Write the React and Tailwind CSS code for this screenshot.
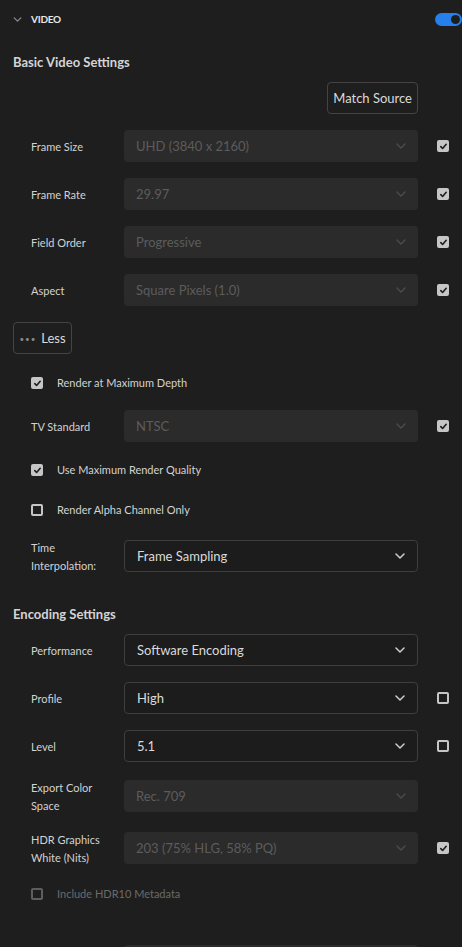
import React from "react";

const font = { fontFamily: "Lato, 'Noto Sans', sans-serif" };

function Chevron({ className }) {
  return (
    <svg viewBox="0 0 10 6" className={className} fill="none" stroke="currentColor" strokeWidth="1.5" strokeLinecap="round" strokeLinejoin="round">
      <path d="M1 1l4 4 4-4" />
    </svg>
  );
}

function Check({ checked, dim }) {
  if (checked) {
    return (
      <div className="w-[12px] h-[12px] rounded-[2px] bg-[#c6c6c6] flex items-center justify-center shrink-0">
        <svg viewBox="0 0 10 10" className="w-[9px] h-[9px]" fill="none" stroke="#1e1e1e" strokeWidth="1.8" strokeLinecap="round" strokeLinejoin="round">
          <path d="M2 5.2l2 2 4-4.6" />
        </svg>
      </div>
    );
  }
  return (
    <div className={"w-[12px] h-[12px] rounded-[2px] border-2 shrink-0 " + (dim ? "border-[#5e5e5e]" : "border-[#c6c6c6]")} />
  );
}

function Dropdown({ value, disabled }) {
  return (
    <div
      className={
        "w-[294px] h-[32px] rounded-[4px] flex items-center justify-between pl-[12px] pr-[12px] shrink-0 " +
        (disabled ? "bg-[#2b2b2b] text-[#5c5c5c]" : "bg-[#1c1c1c] border border-[#3e3e3e] text-[#dadada]")
      }
    >
      <span className="text-[13px] pt-[1px]">{value}</span>
      <Chevron className={"w-[10px] h-[6px] " + (disabled ? "text-[#4a4a4a]" : "text-[#cfcfcf]")} />
    </div>
  );
}

function Field({ label, value, disabled, check, className }) {
  return (
    <div className={"h-[32px] flex items-center " + (className || "")}>
      <div className="w-[111px] pl-[18px] pt-[1px] text-[11px] leading-[18px] text-[#d2d2d2] shrink-0">{label}</div>
      <Dropdown value={value} disabled={disabled} />
      <div className="ml-[19px]">{check !== undefined && <Check checked={check} />}</div>
    </div>
  );
}

function CheckRow({ label, checked, dim, className }) {
  return (
    <div className={"h-[24px] flex items-center pl-[18px] " + (className || "")}>
      <Check checked={checked} dim={dim} />
      <span className={"ml-[14px] text-[11px] " + (dim ? "text-[#6a6a6a]" : "text-[#d2d2d2]")}>{label}</span>
    </div>
  );
}

export default function App() {
  return (
    <div className="min-h-screen bg-[#1e1e1e] pl-[13px] overflow-hidden" style={font}>
      {/* header */}
      <div className="h-[38px] flex items-center">
        <Chevron className="w-[9px] h-[5px] text-[#8a8a8a]" />
        <span className="ml-[9px] text-[10px] font-bold text-[#e6e6e6] tracking-tight">VIDEO</span>
        <div className="ml-auto w-[27px] h-[13px] rounded-full bg-[#2680eb] flex items-center justify-end pr-[2px]">
          <div className="w-[9px] h-[9px] rounded-full bg-[#1e1e1e]" />
        </div>
      </div>

      <div className="mt-[13px] h-[24px] flex items-center text-[13px] font-bold text-[#d4d4d4]">Basic Video Settings</div>

      <div className="mt-[7px] flex justify-end pr-[44px]">
        <button className="h-[32px] px-[5px] pt-[1px] rounded-[4px] border border-[#444] text-[13px] text-[#dadada]">Match Source</button>
      </div>

      <Field className="mt-[16px]" label="Frame Size" value="UHD (3840 x 2160)" disabled check={true} />
      <Field className="mt-[16px]" label="Frame Rate" value="29.97" disabled check={true} />
      <Field className="mt-[16px]" label="Field Order" value="Progressive" disabled check={true} />
      <Field className="mt-[16px]" label="Aspect" value="Square Pixels (1.0)" disabled check={true} />

      <button className="mt-[16px] h-[32px] w-[59px] pt-[2px] rounded-[4px] border border-[#444] flex items-center justify-center gap-[5px]">
        <span className="text-[8px] tracking-[1px] text-[#8a8a8a]">•••</span>
        <span className="text-[13px] text-[#dadada]">Less</span>
      </button>

      <CheckRow className="mt-[17px]" label="Render at Maximum Depth" checked />
      <Field className="mt-[15px]" label="TV Standard" value="NTSC" disabled check={true} />
      <CheckRow className="mt-[16px]" label="Use Maximum Render Quality" checked />
      <CheckRow className="mt-[16px]" label="Render Alpha Channel Only" checked={false} />
      <Field className="mt-[18px]" label={<>Time<br />Interpolation:</>} value="Frame Sampling" />

      <div className="mt-[31px] h-[24px] flex items-center text-[13px] font-bold text-[#d4d4d4]">Encoding Settings</div>

      <Field className="mt-[7px]" label="Performance" value="Software Encoding" />
      <Field className="mt-[16px]" label="Profile" value="High" check={false} />
      <Field className="mt-[16px]" label="Level" value="5.1" check={false} />
      <Field className="mt-[18px]" label={<>Export Color<br />Space</>} value="Rec. 709" disabled />
      <Field className="mt-[20px]" label={<>HDR Graphics<br />White (Nits)</>} value="203 (75% HLG, 58% PQ)" disabled check={true} />
      <CheckRow className="mt-[18px]" label="Include HDR10 Metadata" checked={false} dim />

      <div className="mt-[39px] ml-[111px] w-[294px] h-[32px] rounded-[4px] bg-[#2b2b2b]" />
    </div>
  );
}
